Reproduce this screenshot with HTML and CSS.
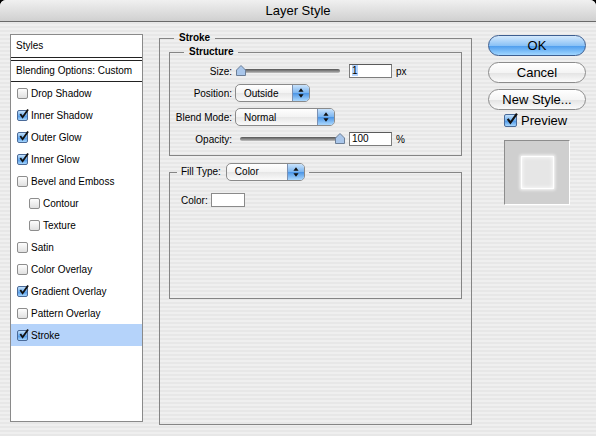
FILE: index.html
```html
<!DOCTYPE html>
<html lang="en">
<head>
    <meta charset="UTF-8">
    <meta name="viewport" content="width=device-width, initial-scale=1.0">
    <title>Layer Style</title>
    <link rel="stylesheet" href="styles.css">
</head>
<body>
    <div class="window">
        <div class="titlebar">Layer Style</div>
        <div class="content">
            <div class="styles-list">
                <div class="list-head">Styles</div>
                <div class="list-blend">Blending Options: Custom</div>
                <div class="item"><span class="cb"></span>Drop Shadow</div>
                <div class="item"><span class="cb on"><svg viewBox="0 0 12 12"><path d="M2.5 5.5 L5 9 L11 0.5"/></svg></span>Inner Shadow</div>
                <div class="item"><span class="cb on"><svg viewBox="0 0 12 12"><path d="M2.5 5.5 L5 9 L11 0.5"/></svg></span>Outer Glow</div>
                <div class="item"><span class="cb on"><svg viewBox="0 0 12 12"><path d="M2.5 5.5 L5 9 L11 0.5"/></svg></span>Inner Glow</div>
                <div class="item"><span class="cb"></span>Bevel and Emboss</div>
                <div class="item sub"><span class="cb"></span>Contour</div>
                <div class="item sub"><span class="cb"></span>Texture</div>
                <div class="item"><span class="cb"></span>Satin</div>
                <div class="item"><span class="cb"></span>Color Overlay</div>
                <div class="item"><span class="cb on"><svg viewBox="0 0 12 12"><path d="M2.5 5.5 L5 9 L11 0.5"/></svg></span>Gradient Overlay</div>
                <div class="item"><span class="cb"></span>Pattern Overlay</div>
                <div class="item active"><span class="cb on"><svg viewBox="0 0 12 12"><path d="M2.5 5.5 L5 9 L11 0.5"/></svg></span>Stroke</div>
            </div>

            <div class="main">
                <fieldset class="group stroke">
                    <legend>Stroke</legend>
                    <fieldset class="group structure">
                        <legend>Structure</legend>
                        <div class="row">
                            <label>Size:</label>
                            <div class="slider">
                                <div class="track"></div>
                                <svg class="knob knob-min" viewBox="0 0 10 11"><path d="M5 0.5 L9.5 5 L9.5 10.5 L0.5 10.5 L0.5 5 Z"/></svg>
                            </div>
                            <span class="field"><span class="sel">1</span></span>
                            <span class="unit">px</span>
                        </div>
                        <div class="row">
                            <label>Position:</label>
                            <div class="popup pos">Outside<span class="arrows"><svg viewBox="0 0 7 11"><path d="M3.5 0 L6.5 4 L0.5 4 Z M0.5 7 L6.5 7 L3.5 11 Z"/></svg></span></div>
                        </div>
                        <div class="row spaced">
                            <label>Blend Mode:</label>
                            <div class="popup blend">Normal<span class="arrows"><svg viewBox="0 0 7 11"><path d="M3.5 0 L6.5 4 L0.5 4 Z M0.5 7 L6.5 7 L3.5 11 Z"/></svg></span></div>
                        </div>
                        <div class="row">
                            <label>Opacity:</label>
                            <div class="slider">
                                <div class="track"></div>
                                <svg class="knob knob-max" viewBox="0 0 10 11"><path d="M5 0.5 L9.5 5 L9.5 10.5 L0.5 10.5 L0.5 5 Z"/></svg>
                            </div>
                            <span class="field">100</span>
                            <span class="unit">%</span>
                        </div>
                    </fieldset>

                    <fieldset class="group fill">
                        <legend>
                            <label>Fill Type:</label>
                            <div class="popup filltype">Color<span class="arrows"><svg viewBox="0 0 7 11"><path d="M3.5 0 L6.5 4 L0.5 4 Z M0.5 7 L6.5 7 L3.5 11 Z"/></svg></span></div>
                        </legend>
                        <div class="color-row">
                            <label>Color:</label>
                            <span class="color-swatch"></span>
                        </div>
                    </fieldset>
                </fieldset>
            </div>

            <div class="side">
                <button class="btn default">OK</button>
                <button class="btn">Cancel</button>
                <button class="btn">New Style...</button>
                <div class="preview-check"><span class="cb on big"><svg viewBox="0 0 12 12"><path d="M2.5 5.5 L5 9 L11 0.5"/></svg></span>Preview</div>
                <div class="preview-box">
                    <div class="preview-square"></div>
                </div>
            </div>
        </div>
    </div>
</body>
</html>
```

FILE: styles.css
```css
* {
    box-sizing: border-box;
}
html, body {
    margin: 0;
    padding: 0;
    background-color: #000;
}
body {
    font-family: "Liberation Sans", Arial, sans-serif;
    font-size: 10px;
    color: #000;
}
.window {
    width: 596px;
    height: 436px;
    border-radius: 6px 6px 0 0;
    overflow: hidden;
    background: repeating-linear-gradient(to bottom, #efefef 0, #efefef 2px, #e7e7e7 2px, #e7e7e7 4px);
}
.titlebar {
    height: 22px;
    line-height: 21px;
    border-bottom: 1px solid #696969;
    background: linear-gradient(#f0f0f0, #d0d0d0);
    text-align: center;
    font-size: 13px;
}
.content {
    display: flex;
    align-items: flex-start;
    padding-left: 10px;
}

/* styles list */
.styles-list {
    width: 133px;
    height: 388px;
    margin-top: 12px;
    background-color: #fff;
    border: 1px solid #8a8a8a;
}
.list-head {
    height: 23px;
    line-height: 22px;
    padding-left: 5px;
    border-bottom: 1px solid #222;
}
.list-blend {
    height: 22px;
    line-height: 20px;
    margin-top: 2px;
    padding-left: 5px;
    border-top: 1px solid #222;
    border-bottom: 1px solid #222;
}
.item {
    display: flex;
    align-items: center;
    height: 22px;
    padding-left: 6px;
}
.item.sub {
    padding-left: 18px;
}
.item.active {
    background-color: #b5d3fa;
}
.cb {
    position: relative;
    width: 11px;
    height: 11px;
    margin-right: 3px;
    border: 1px solid #8d8d8d;
    border-radius: 2px;
    background: linear-gradient(#fdfdfd, #e0e0e0);
}
.cb.on {
    border-color: #4a6a98;
    background: linear-gradient(#c4e2fc, #6eaeee 50%, #4893e6 51%, #a6d6fd);
}
.cb svg {
    position: absolute;
    left: 0;
    top: -2px;
    width: 11px;
    height: 11px;
    overflow: visible;
}
.cb svg path {
    fill: none;
    stroke: #111;
    stroke-width: 2;
}
.cb.big {
    width: 13px;
    height: 13px;
    margin-right: 4px;
}
.cb.big svg {
    width: 13px;
    height: 13px;
}

/* group boxes */
.main {
    margin: 9px 0 0 16px;
}
.group {
    margin: 0;
    padding: 0;
    min-width: 0;
    border: 1px solid #858585;
}
.group legend {
    padding: 0 5px;
    line-height: 14px;
    font-weight: bold;
}
.stroke {
    width: 313px;
    height: 394px;
    padding: 0 9px 0 9px;
}
.stroke > legend {
    margin-left: 5px;
}
.structure {
    width: 293px;
    height: 111px;
    padding-top: 1px;
}
.structure > legend {
    margin-left: 14px;
}
.row {
    display: flex;
    align-items: center;
    height: 22px;
}
.row.spaced {
    margin-top: 2px;
}
.row label {
    width: 62px;
    margin-right: 3px;
    text-align: right;
}

/* slider */
.slider {
    position: relative;
    width: 111px;
    height: 14px;
    padding: 5px 6px 0 5px;
}
.track {
    height: 4px;
    border-radius: 2px;
    background: linear-gradient(#555, #9a9a9a 70%, #c4c4c4);
}
.knob {
    position: absolute;
    top: 1px;
    width: 10px;
    height: 11px;
}
.knob path {
    fill: #a9c6ea;
    stroke: #6c7e96;
    stroke-width: 1;
}
.knob-min {
    left: 1px;
}
.knob-max {
    left: 100px;
}
.field {
    width: 43px;
    height: 14px;
    margin-left: 3px;
    padding-left: 2px;
    line-height: 12px;
    border: 1px solid #7d7d7d;
    border-top-color: #5b5b5b;
    background-color: #fff;
}
.sel {
    background-color: #b5d5ff;
}
.unit {
    margin-left: 4px;
}

/* popup menus */
.popup {
    display: flex;
    align-items: center;
    height: 18px;
    padding-left: 8px;
    border: 1px solid #8a8a8a;
    border-radius: 5px;
    background: linear-gradient(#fff, #f3f3f3 50%, #e6e6e6 51%, #fafafa);
    font-weight: normal;
    overflow: hidden;
}
.popup.pos {
    width: 75px;
}
.popup.blend {
    width: 100px;
}
.popup.filltype {
    width: 79px;
    margin-left: 5px;
}
.arrows {
    display: flex;
    align-items: center;
    justify-content: center;
    width: 17px;
    height: 100%;
    margin-left: auto;
    border-left: 1px solid #7b90b2;
    background: linear-gradient(#cae3fb, #79b4f0 50%, #4a94e5 51%, #acd8fd);
}
.arrows svg {
    width: 6px;
    height: 10px;
}
.arrows path {
    fill: #111;
}

/* fill */
.fill {
    width: 293px;
    height: 136px;
    margin-top: 7px;
    padding: 12px 0 0 0;
}
.fill > legend {
    display: flex;
    align-items: center;
    margin-left: 7px;
    padding: 0 4px;
    font-weight: normal;
}
.color-row {
    display: flex;
    align-items: center;
    padding-left: 11px;
}
.color-swatch {
    width: 34px;
    height: 14px;
    margin-left: 3px;
    border: 1px solid #8a8a8a;
    background-color: #fff;
}

/* buttons + preview */
.side {
    width: 98px;
    margin: 13px 0 0 16px;
}
.btn {
    display: block;
    width: 98px;
    height: 21px;
    margin: 0 0 6px 0;
    padding: 0;
    border: 1px solid #8c8c8c;
    border-radius: 11px;
    background: linear-gradient(#fff, #f4f4f4 50%, #e3e3e3 51%, #fbfbfb);
    font-family: "Liberation Sans", Arial, sans-serif;
    font-size: 13px;
    line-height: 19px;
    color: #000;
}
.btn:nth-of-type(3) {
    margin-bottom: 0;
}
.btn.default {
    border-color: #3d5e90;
    background: linear-gradient(#d4e9fc, #8bc2f6 50%, #4b9bed 51%, #a0d6ff);
}
.preview-check {
    display: flex;
    align-items: center;
    height: 15px;
    margin: 3px 0 0 16px;
    font-size: 13px;
}
.preview-box {
    display: flex;
    align-items: center;
    justify-content: center;
    width: 66px;
    height: 65px;
    margin: 12px 0 0 16px;
    border: 1px solid;
    border-color: #8d8d8d #fff #fff #8d8d8d;
    background-color: #cfcfcf;
}
.preview-square {
    width: 33px;
    height: 33px;
    border: 1px solid #fff;
    background-color: #e6e6e6;
    box-shadow: 0 0 3px 1px rgba(255, 255, 255, 0.9), inset 0 0 4px #fff;
}
```
